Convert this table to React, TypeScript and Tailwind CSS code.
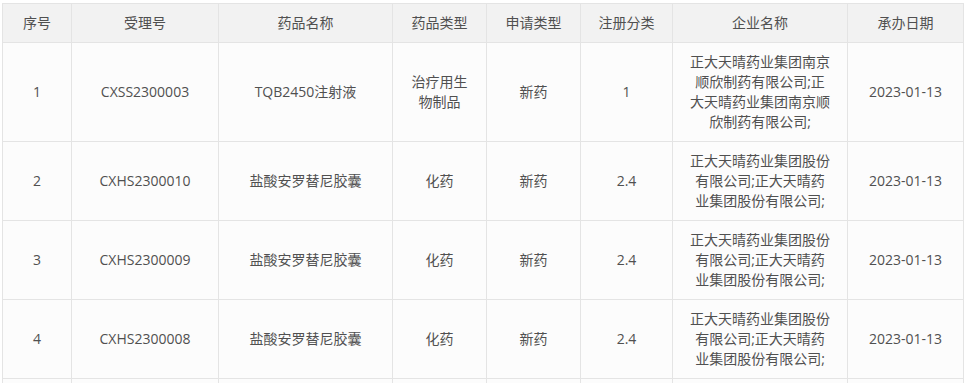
const headers = ['序号', '受理号', '药品名称', '药品类型', '申请类型', '注册分类', '企业名称', '承办日期'];

const widths = ['w-[69px]', 'w-[147px]', 'w-[174px]', 'w-[94px]', 'w-[94px]', 'w-[92px]', 'w-[175px]', 'w-[116px]'];

const rows = [
    ['1', 'CXSS2300003', 'TQB2450注射液', '治疗用生物制品', '新药', '1', '正大天晴药业集团南京顺欣制药有限公司;正大天晴药业集团南京顺欣制药有限公司;', '2023-01-13'],
    ['2', 'CXHS2300010', '盐酸安罗替尼胶囊', '化药', '新药', '2.4', '正大天晴药业集团股份有限公司;正大天晴药业集团股份有限公司;', '2023-01-13'],
    ['3', 'CXHS2300009', '盐酸安罗替尼胶囊', '化药', '新药', '2.4', '正大天晴药业集团股份有限公司;正大天晴药业集团股份有限公司;', '2023-01-13'],
    ['4', 'CXHS2300008', '盐酸安罗替尼胶囊', '化药', '新药', '2.4', '正大天晴药业集团股份有限公司;正大天晴药业集团股份有限公司;', '2023-01-13'],
];

export default function App() {
    return (
        <div className="min-h-screen bg-white pt-[3px] pl-[2px] overflow-hidden font-['Open_Sans','Noto_Sans_CJK_SC',sans-serif] text-[14px] leading-5 text-[#505050]">
            <table className="table-fixed border-collapse w-[961px]">
                <colgroup>
                    {widths.map((w, i) => (
                        <col key={i} className={w} />
                    ))}
                </colgroup>
                <thead>
                    <tr className="bg-[#f2f2f2]">
                        {headers.map((h) => (
                            <th key={h} className="border border-[#e4e4e4] px-2 py-[9px] font-normal text-center">
                                {h}
                            </th>
                        ))}
                    </tr>
                </thead>
                <tbody>
                    {rows.map((r) => (
                        <tr key={r[0]} className="bg-[#fcfcfc]">
                            {r.map((c, i) => (
                                <td
                                    key={i}
                                    className={`border border-[#e4e4e4] py-[9px] text-center align-middle ${i === 6 ? 'px-4' : i === 3 ? 'px-[18px]' : 'px-2'}`}
                                >
                                    {c}
                                </td>
                            ))}
                        </tr>
                    ))}
                    {/* next row, only its top edge is in view */}
                    <tr className="bg-[#fcfcfc] h-[8px]">
                        {headers.map((h) => (
                            <td key={h} className="border border-[#e4e4e4] p-0" />
                        ))}
                    </tr>
                </tbody>
            </table>
        </div>
    );
}
